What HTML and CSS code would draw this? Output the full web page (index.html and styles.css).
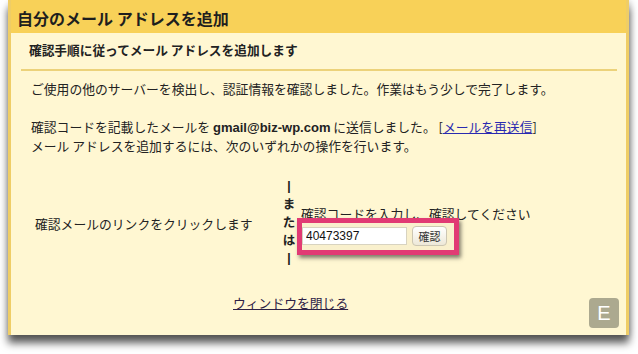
FILE: index.html
```html
<!DOCTYPE html>
<html lang="ja">
<head>
  <meta charset="UTF-8" />
  <title>自分のメール アドレスを追加</title>
  <link rel="stylesheet" href="styles.css">
</head>
<body>
  <div class="dialog">
    <div class="dialog-title">自分のメール アドレスを追加</div>

    <div class="step-title">確認手順に従ってメール アドレスを追加します</div>

    <p class="msg">ご使用の他のサーバーを検出し、認証情報を確認しました。作業はもう少しで完了します。</p>

    <p class="msg">
      確認コードを記載したメールを <b class="addr">gmail@biz-wp.com</b> に送信しました。 [<a href="#" class="resend">メールを再送信</a>]<br />
      メール アドレスを追加するには、次のいずれかの操作を行います。
    </p>

    <div class="options">
      <div class="opt-left">確認メールのリンクをクリックします</div>
      <div class="or-col">
        <span class="bar">|</span>
        <span>ま</span>
        <span>た</span>
        <span>は</span>
        <span class="bar">|</span>
      </div>
      <div class="opt-right">
        <div class="opt-label">確認コードを入力し、確認してください</div>
        <div class="code-box">
          <input type="text" class="code-input" value="40473397" />
          <button class="code-btn">確認</button>
        </div>
      </div>
    </div>

    <div class="close-row">
      <a href="#" class="close-link">ウィンドウを閉じる</a>
    </div>

    <div class="badge">E</div>
  </div>
</body>
</html>
```

FILE: styles.css
```css
html, body {
  margin: 0;
  padding: 0;
  background: #fff;
  font-family: 'Noto Sans CJK JP', 'Liberation Sans', sans-serif;
  color: #222;
  overflow: hidden;
}

body {
  height: 354px;
}

.dialog {
  position: relative;
  margin-left: 8px;
  width: 615px;
  height: 335px;
  background: #fff7d2;
  border-left: 3px solid #efcd66;
  border-right: 3px solid #efcd66;
  box-shadow: 0 8px 8px rgba(0, 0, 0, 0.65), 2px 0 6px rgba(0, 0, 0, 0.15);
}

.dialog-title {
  height: 33px;
  box-sizing: border-box;
  padding: 3px 0 0 6px;
  line-height: 30px;
  background: #f8d158;
  font-size: 16px;
  font-weight: bold;
  color: #1e1e1e;
}

.step-title {
  margin: 0 9px 0 10px;
  padding: 8px 0 10px 8px;
  line-height: 18px;
  font-size: 12.7px;
  font-weight: bold;
  border-bottom: 2px solid #ecd27a;
}

.msg {
  margin: 9px 0 0 20px;
  font-size: 12.8px;
  line-height: 18px;
}

.msg + .msg {
  margin-top: 20px;
}

.addr {
  font-family: 'Liberation Sans', Arial, sans-serif;
  font-size: 13px;
}

.resend {
  color: #2a2ab0;
}

.options {
  display: flex;
  align-items: flex-start;
  margin-top: 22px;
  font-size: 12.8px;
}

.opt-left {
  width: 242px;
  margin-top: 38px;
  padding-left: 24px;
  line-height: 18px;
}

.or-col {
  display: flex;
  flex-direction: column;
  align-items: center;
  width: 24px;
  font-weight: bold;
  font-size: 12.5px;
}

.or-col span {
  height: 18px;
  line-height: 18px;
}

.or-col .bar {
  font-family: 'Liberation Sans', Arial, sans-serif;
  font-size: 12px;
  color: #111;
}

.opt-right {
  margin-top: 28px;
}

.opt-label {
  line-height: 18px;
}

.code-box {
  position: relative;
  display: flex;
  align-items: center;
  gap: 5px;
  width: 147px;
  margin: -5px 0 0 -4px;
  padding: 3px 5px 4px 0;
  border: 5px solid #e13a74;
  background: #f9f0cd;
  box-shadow: 2px 3px 4px rgba(0, 0, 0, 0.5);
}

.code-input {
  width: 105px;
  height: 18px;
  box-sizing: border-box;
  margin: 0;
  padding: 1px 3px;
  border: 1px solid #d8d3c0;
  font-family: 'Liberation Sans', Arial, sans-serif;
  font-size: 12px;
  color: #111;
  background: #fff;
}

.code-btn {
  width: 35px;
  height: 20px;
  margin: 0;
  padding: 0;
  border: 1px solid #ccc6b2;
  border-radius: 4px;
  background: linear-gradient(#fff, #ede8d8);
  font-family: 'Noto Sans CJK JP', sans-serif;
  font-size: 11px;
  color: #333;
}

.close-row {
  margin-top: 27px;
  padding-left: 222px;
  font-size: 12.8px;
  line-height: 18px;
}

.close-link {
  color: #2e2245;
}

.badge {
  position: absolute;
  right: 7px;
  bottom: 7px;
  width: 30px;
  height: 30px;
  border-radius: 4px;
  background: #aca98f;
  color: #fff;
  font-family: 'Liberation Sans', Arial, sans-serif;
  font-size: 20px;
  line-height: 30px;
  text-align: center;
}
```
